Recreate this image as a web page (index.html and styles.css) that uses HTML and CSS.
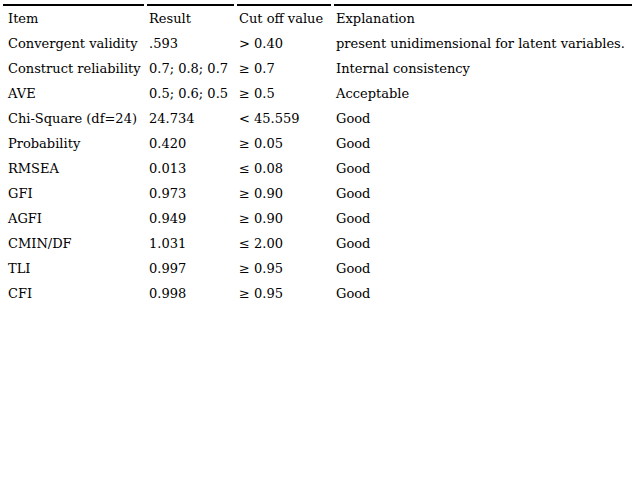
FILE: index.html
```html
<!DOCTYPE html>
<html>
<head>
<meta charset="utf-8">
<link rel="stylesheet" href="styles.css">
</head>
<body>
<table class="fit">
  <colgroup>
    <col class="c1"><col class="c2"><col class="c3"><col class="c4">
  </colgroup>
  <thead>
    <tr><th class="first">Item</th><th>Result</th><th>Cut off value</th><th>Explanation</th></tr>
  </thead>
  <tbody>
    <tr><td class="first">Convergent validity</td><td>.593</td><td>&gt; 0.40</td><td>present unidimensional for latent variables.</td></tr>
    <tr><td class="first">Construct reliability</td><td>0.7; 0.8; 0.7</td><td>≥ 0.7</td><td>Internal consistency</td></tr>
    <tr><td class="first">AVE</td><td>0.5; 0.6; 0.5</td><td>≥ 0.5</td><td>Acceptable</td></tr>
    <tr><td class="first">Chi-Square (df=24)</td><td>24.734</td><td>&lt; 45.559</td><td>Good</td></tr>
    <tr><td class="first">Probability</td><td>0.420</td><td>≥ 0.05</td><td>Good</td></tr>
    <tr><td class="first">RMSEA</td><td>0.013</td><td>≤ 0.08</td><td>Good</td></tr>
    <tr><td class="first">GFI</td><td>0.973</td><td>≥ 0.90</td><td>Good</td></tr>
    <tr><td class="first">AGFI</td><td>0.949</td><td>≥ 0.90</td><td>Good</td></tr>
    <tr><td class="first">CMIN/DF</td><td>1.031</td><td>≤ 2.00</td><td>Good</td></tr>
    <tr><td class="first">TLI</td><td>0.997</td><td>≥ 0.95</td><td>Good</td></tr>
    <tr><td class="first">CFI</td><td>0.998</td><td>≥ 0.95</td><td>Good</td></tr>
  </tbody>
</table>
</body>
</html>
```
FILE: styles.css
```css
html, body {
  margin: 0;
  padding: 0;
  background: #fff;
}
body {
  font-family: "DejaVu Serif", "Liberation Serif", serif;
  font-size: 13px;
  color: #000;
}
.fit {
  margin-top: 4px;
  border-collapse: separate;
  border-spacing: 3px 0;
  table-layout: fixed;
  width: 635px;
  margin-left: 0;
}
.c1 { width: 141px; }
.c2 { width: 87px; }
.c3 { width: 94px; }
.c4 { width: 298px; }
th, td {
  text-align: left;
  font-weight: normal;
  white-space: nowrap;
  padding: 1px 0 0 2px;
  height: 24px;
  vertical-align: middle;
  overflow: visible;
}
th {
  border-top: 2px solid #000;
  height: 23px;
}
.first {
  padding-left: 5px;
}
```
